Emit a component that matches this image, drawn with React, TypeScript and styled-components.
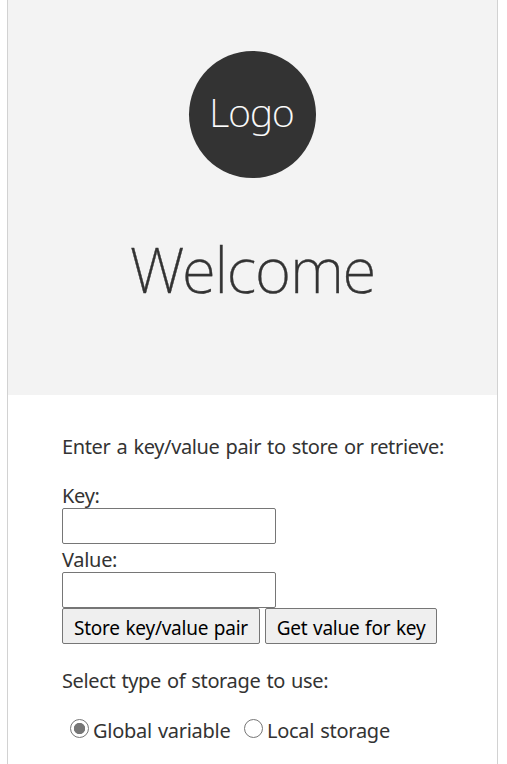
import React, { useState } from "react";
import styled, { createGlobalStyle } from "styled-components";

const GlobalStyle = createGlobalStyle`
  * { box-sizing: border-box; }
  body {
    margin: 0;
    background: #fff;
    color: #333;
    font-family: "Noto Sans", "Open Sans", sans-serif;
    font-size: 20px;
    font-weight: 400;
    overflow: hidden;
  }
`;

const Pane = styled.main`
  width: 491px;
  height: 764px;
  margin-left: 7px;
  border: solid #d2d2d2;
  border-width: 0 1px;
  overflow: hidden;
`;

const Header = styled.header`
  height: 395px;
  padding-top: 51px;
  background: #f3f3f3;
  display: flex;
  flex-direction: column;
  align-items: center;
`;

const Logo = styled.div`
  width: 127px;
  height: 127px;
  padding-right: 2px;
  border-radius: 50%;
  background: #333;
  color: #fff;
  font-size: 39px;
  font-weight: 200;
  line-height: 122px;
  text-align: center;
  letter-spacing: -0.9px;
  -webkit-text-stroke: 0.2px #fff;
`;

const Title = styled.h1`
  margin: 48px 0 0;
  font-size: 62px;
  font-weight: 200;
  line-height: 86px;
  letter-spacing: -1.2px;
  white-space: nowrap;
  -webkit-text-stroke: 0.4px #333;
`;

const Content = styled.section`
  padding: 37px 54px 0;
`;

const Line = styled.p<{ $gap: number }>`
  margin: 0 0 ${(p) => p.$gap}px;
  height: 28px;
  line-height: 30px;
  white-space: nowrap;
  letter-spacing: -0.36px;
  word-spacing: 1.2px;
`;

const Label = styled.label`
  display: block;
  height: 28px;
  line-height: 32px;
  letter-spacing: -0.3px;
`;

const Field = styled.input`
  display: block;
  width: 214px;
  height: 36px;
  border: 1px solid #767676;
  border-radius: 2px;
  background: #fff;
  font: inherit;
`;

const Buttons = styled.div`
  display: flex;
  gap: 5px;
  margin-bottom: 22px;
`;

const Button = styled.button<{ $width: number }>`
  width: ${(p) => p.$width}px;
  height: 36px;
  padding: 3px 0 0;
  border: 1px solid #767676;
  border-radius: 2px;
  background: #efefef;
  color: #000;
  font: inherit;
  font-size: 19px;
  line-height: 30px;
  letter-spacing: -0.25px;
  word-spacing: 1px;
  white-space: nowrap;
`;

const Options = styled.div`
  display: flex;
  padding-left: 8px;
`;

const Option = styled.label<{ $width: number }>`
  display: flex;
  width: ${(p) => p.$width}px;
  line-height: 32px;
  letter-spacing: -0.28px;
  word-spacing: 1.2px;
  white-space: nowrap;
`;

const Radio = styled.input`
  appearance: none;
  flex: none;
  width: 19px;
  height: 19px;
  margin: 4px 4px 0 0;
  border: 1px solid #767676;
  border-radius: 50%;
  background: #fff;
  &:checked {
    background: radial-gradient(circle, #767676 5.3px, #fff 6px);
  }
`;

export default function App() {
  const [storage, setStorage] = useState("global");
  return (
    <>
      <GlobalStyle />
      <Pane>
        <Header>
          <Logo>Logo</Logo>
          <Title>Welcome</Title>
        </Header>
        <Content>
          <Line $gap={20}>Enter a key/value pair to store or retrieve:</Line>
          <Label htmlFor="key">Key:</Label>
          <Field id="key" />
          <Label htmlFor="value">Value:</Label>
          <Field id="value" />
          <Buttons>
            <Button $width={198}>Store key/value pair</Button>
            <Button $width={172}>Get value for key</Button>
          </Buttons>
          <Line $gap={21}>Select type of storage to use:</Line>
          <Options>
            <Option $width={174}>
              <Radio type="radio" name="storage" checked={storage === "global"} onChange={() => setStorage("global")} />
              Global variable
            </Option>
            <Option $width={160}>
              <Radio type="radio" name="storage" checked={storage === "local"} onChange={() => setStorage("local")} />
              Local storage
            </Option>
          </Options>
        </Content>
      </Pane>
    </>
  );
}
